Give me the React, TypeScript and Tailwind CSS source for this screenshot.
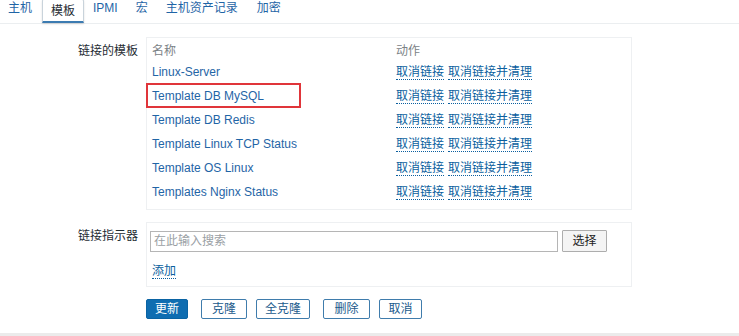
import React from "react";

const font = { fontFamily: '"Liberation Sans", Arial, "Noto Sans CJK SC", sans-serif' };

const templates = [
  "Linux-Server",
  "Template DB MySQL",
  "Template DB Redis",
  "Template Linux TCP Status",
  "Template OS Linux",
  "Templates Nginx Status",
];

function ActionLink({ children }: { children: React.ReactNode }) {
  return (
    <span className="text-[#0b5f9e] border-b border-dotted border-[#0b5f9e] leading-[14px] cursor-pointer">
      {children}
    </span>
  );
}

export default function App() {
  const btn = "h-[20px] rounded-[2px] bg-white border border-[#3f7cac] text-[#1a5a8c] text-[12px] leading-none";
  return (
    <div className="w-[739px] h-[336px] bg-white text-[12px] text-[#1f2c33] overflow-hidden relative" style={font}>
      {/* tabs */}
      <div className="flex items-end h-[24px] border-b border-[#ebeef0] pl-[8px]">
        <div className="text-[#1f65a6] mr-[10px] pb-[6px]">主机</div>
        <div className="h-[24px] px-[8px] flex items-center border border-[#c9d3db] border-b-[#3c7bb1] border-b-2 rounded-t-[2px] bg-white text-[#1f2c33] shadow-[0_1px_2px_rgba(0,0,0,0.15)] mr-[9px]">
          模板
        </div>
        <div className="text-[#1f65a6] mr-[18px] pb-[6px]">IPMI</div>
        <div className="text-[#1f65a6] mr-[18px] pb-[6px]">宏</div>
        <div className="text-[#1f65a6] mr-[19px] pb-[6px]">主机资产记录</div>
        <div className="text-[#1f65a6] pb-[6px]">加密</div>
      </div>

      {/* linked templates */}
      <div className="flex mt-[13px]">
        <div className="w-[138px] text-right pt-[5px] text-[#1f2c33]">链接的模板</div>
        <div className="ml-[8px] w-[486px] border border-[#eef0f2] pl-[5px] pt-[4px] pb-[5px]">
          <div className="flex h-[18px] items-center text-[#7b8286]">
            <div className="w-[244px]">名称</div>
            <div>动作</div>
          </div>
          {templates.map((t, i) => (
            <div key={t} className="flex h-[24px] items-center">
              <div className="w-[244px] relative">
                <span className="text-[#1f65a6] text-[12px]">{t}</span>
                {i === 1 && (
                  <div className="absolute left-[-6px] top-[-4px] w-[155px] h-[25px] border-2 border-[#e0353a]" />
                )}
              </div>
              <div className="flex gap-[4px]">
                <ActionLink>取消链接</ActionLink>
                <ActionLink>取消链接并清理</ActionLink>
              </div>
            </div>
          ))}
        </div>
      </div>

      {/* link indicator */}
      <div className="flex mt-[12px]">
        <div className="w-[138px] text-right pt-[5px]">链接指示器</div>
        <div className="ml-[8px] w-[486px] border border-[#eef0f2] pl-[3px] pt-[7px] pb-[6px]">
          <div className="flex items-center gap-[4px]">
            <div className="w-[408px] h-[21px] border border-[#b5b5b5] px-[3px] flex items-center text-[#9aa0a4]">
              在此输入搜索
            </div>
            <button className="h-[22px] w-[45px] border border-[#adadad] bg-[#f4f4f4] text-[#222] text-[12px] rounded-[1px]">
              选择
            </button>
          </div>
          <div className="mt-[10px] ml-[2px]">
            <span className="text-[#0b5f9e] border-b border-dotted border-[#0b5f9e]">添加</span>
          </div>
        </div>
      </div>

      {/* buttons */}
      <div className="flex ml-[146px] mt-[12px]">
        <button className="h-[20px] w-[42px] rounded-[2px] bg-[#0f6db1] border border-[#0a63a3] text-white text-[12px] leading-none">
          更新
        </button>
        <button className={`${btn} w-[46px] ml-[13px]`}>克隆</button>
        <button className={`${btn} w-[54px] ml-[9px]`}>全克隆</button>
        <button className={`${btn} w-[47px] ml-[13px]`}>删除</button>
        <button className={`${btn} w-[43px] ml-[9px]`}>取消</button>
      </div>

      <div className="absolute left-0 right-0 bottom-0 h-[3px] bg-[#ebebeb]" />
    </div>
  );
}
